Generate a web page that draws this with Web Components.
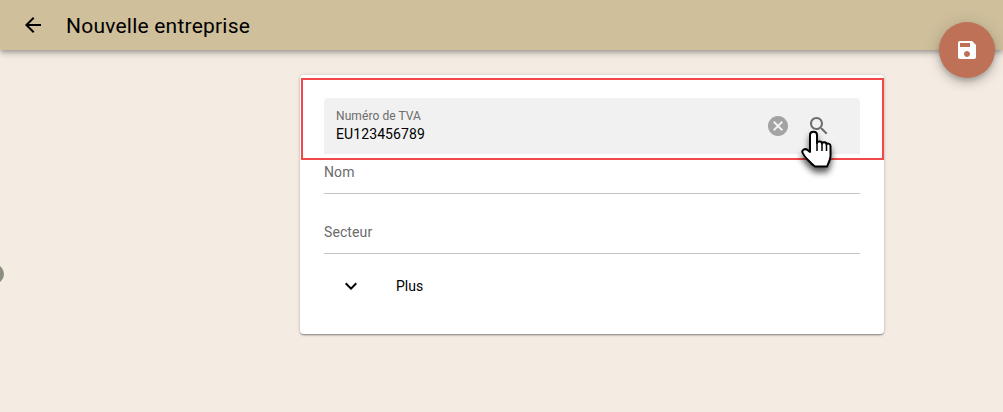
<!DOCTYPE html>
<html lang="fr">
<head>
<meta charset="utf-8">
<title>Nouvelle entreprise</title>
<style>
  html, body { margin: 0; height: 100%; }
  body { background: #f4ece3; font-family: Roboto, "Liberation Sans", sans-serif; overflow: hidden; }
</style>
</head>
<body>
<app-page>
  <app-toolbar slot="toolbar" title="Nouvelle entreprise"></app-toolbar>
  <form-card>
    <filled-field label="Numéro de TVA" value="EU123456789"></filled-field>
    <line-field label="Nom"></line-field>
    <line-field label="Secteur"></line-field>
    <more-row label="Plus"></more-row>
  </form-card>
</app-page>

<script>
const icons = {
  back: "M20 11H7.83l5.59-5.59L12 4l-8 8 8 8 1.41-1.41L7.83 13H20v-2z",
  save: "M17 3H5c-1.11 0-2 .9-2 2v14c0 1.1.89 2 2 2h14c1.1 0 2-.9 2-2V7l-4-4zm-5 16c-1.66 0-3-1.34-3-3s1.34-3 3-3 3 1.34 3 3-1.34 3-3 3zm3-10H5V5h10v4z",
  search: "M15.5 14h-.79l-.28-.27C15.41 12.59 16 11.11 16 9.5 16 5.91 13.09 3 9.5 3S3 5.91 3 9.5 5.91 16 9.5 16c1.61 0 3.09-.59 4.23-1.57l.27.28v.79l5 4.99L20.49 19l-4.99-5zm-6 0C7.01 14 5 11.99 5 9.5S7.01 5 9.5 5 14 7.01 14 9.5 11.99 14 9.5 14z",
  cancel: "M12 2C6.47 2 2 6.47 2 12s4.47 10 10 10 10-4.47 10-10S17.53 2 12 2zm5 13.59L15.59 17 12 13.41 8.41 17 7 15.59 10.59 12 7 8.41 8.41 7 12 10.59 15.59 7 17 8.41 13.41 12 17 15.59z",
  more: "M16.59 8.59L12 13.17 7.41 8.59 6 10l6 6 6-6z"
};
const svg = (name, size, fill) =>
  `<svg width="${size}" height="${size}" viewBox="0 0 24 24" fill="${fill}"><path d="${icons[name]}"/></svg>`;

class AppPage extends HTMLElement {
  constructor() {
    super();
    this.attachShadow({ mode: "open" }).innerHTML = `
      <style>
        :host { display: block; position: relative; height: 412px; overflow: hidden; }
        main { padding: 25px 0 0 300px; }
        .fab {
          position: absolute; left: 939px; top: 22px; width: 56px; height: 56px; border-radius: 50%;
          background: #bf7158; display: flex; align-items: center; justify-content: center;
          box-shadow: 0 3px 5px -1px rgba(0,0,0,.2), 0 6px 10px 0 rgba(0,0,0,.14), 0 1px 18px 0 rgba(0,0,0,.12);
        }
        .dot { position: absolute; left: -16px; top: 264px; width: 20px; height: 20px; border-radius: 50%; background: #8b8f7e; }
        .highlight { position: absolute; left: 301px; top: 78px; width: 579px; height: 78px; border: 2px solid #f44848; }
        .cursor { position: absolute; left: 798px; top: 126px; filter: drop-shadow(0 5px 3px rgba(0,0,0,.65)); }
      </style>
      <slot name="toolbar"></slot>
      <main><slot></slot></main>
      <div class="dot"></div>
      <div class="highlight"></div>
      <div class="fab">${svg("save", 24, "#fff")}</div>
      <svg class="cursor" width="40" height="48" viewBox="0 0 40 48">
        <path d="M12 9c0-4.500 7-4.500 7 0V17c0-2.200 5-2 5 .5 .3-2 4.500-1.800 4.500 1 .5-1.600 4-1.200 4 1.500V30c0 4-2 7-3.500 10.500H17c-3-2-11-10-12.500-14-1-2.500 2.500-4.500 5-2.500L12 26z" fill="#fff" stroke="#000" stroke-width="2" stroke-linejoin="round"/>
        <path d="M19 17v8M24 18v7M28.500 19v6" stroke="#000" stroke-width="1.500" fill="none"/>
      </svg>`;
  }
}

class AppToolbar extends HTMLElement {
  constructor() {
    super();
    this.attachShadow({ mode: "open" }).innerHTML = `
      <style>
        :host {
          display: flex; align-items: center; height: 50px; background: #cfbf9b; padding-left: 21px;
          box-shadow: 0 2px 4px -1px rgba(0,0,0,.2), 0 4px 5px 0 rgba(0,0,0,.14), 0 1px 10px 0 rgba(0,0,0,.12);
          position: relative; gap: 21px;
        }
        svg { display: block; }
        span { font-size: 21px; font-weight: 400; letter-spacing: .22px; color: #000; padding-top: 2px; }
      </style>
      ${svg("back", 24, "#000")}
      <span>${this.getAttribute("title")}</span>`;
  }
}

class FormCard extends HTMLElement {
  constructor() {
    super();
    this.attachShadow({ mode: "open" }).innerHTML = `
      <style>
        :host {
          display: block; box-sizing: border-box; width: 584px; height: 259px; padding: 23px 24px 0;
          background: #fff; border-radius: 4px;
          box-shadow: 0 2px 2px -1px rgba(0,0,0,.3), 0 1px 2px 0 rgba(0,0,0,.18), 0 0 4px 0 rgba(0,0,0,.12);
        }
      </style>
      <slot></slot>`;
  }
}

class FilledField extends HTMLElement {
  constructor() {
    super();
    this.attachShadow({ mode: "open" }).innerHTML = `
      <style>
        :host {
          display: flex; align-items: center; box-sizing: border-box; height: 56px; padding: 0 29px 0 12px;
          background: #f1f1f1; border-radius: 4px 4px 0 0;
        }
        .text { flex: 1; padding-bottom: 1px; }
        .label { font-size: 12px; line-height: 16px; color: #6b6b6b; letter-spacing: .08px; }
        .value { font-size: 14px; line-height: 20px; color: #000; letter-spacing: .1px; }
        svg { display: block; }
        .actions { display: flex; gap: 17px; align-items: center; }
      </style>
      <div class="text">
        <div class="label">${this.getAttribute("label")}</div>
        <div class="value">${this.getAttribute("value")}</div>
      </div>
      <div class="actions">${svg("cancel", 24, "#a3a3a3")}${svg("search", 24, "#6e6e6e")}</div>`;
  }
}

class LineField extends HTMLElement {
  constructor() {
    super();
    this.attachShadow({ mode: "open" }).innerHTML = `
      <style>
        :host {
          display: flex; align-items: flex-end; box-sizing: border-box; height: 60px; padding-bottom: 11px;
          border-bottom: 1px solid #c4c4c4; font-size: 14px; line-height: 20px; color: #6b6b6b; letter-spacing: .1px;
        }
        :host(:first-of-type) { height: 40px; }
      </style>
      ${this.getAttribute("label")}`;
  }
}

class MoreRow extends HTMLElement {
  constructor() {
    super();
    this.attachShadow({ mode: "open" }).innerHTML = `
      <style>
        :host { display: flex; align-items: center; height: 64px; padding-left: 15px; gap: 33px; font-size: 14px; color: #000; }
        svg { display: block; }
      </style>
      ${svg("more", 24, "#000")}
      <span>${this.getAttribute("label")}</span>`;
  }
}

customElements.define("app-page", AppPage);
customElements.define("app-toolbar", AppToolbar);
customElements.define("form-card", FormCard);
customElements.define("filled-field", FilledField);
customElements.define("line-field", LineField);
customElements.define("more-row", MoreRow);
</script>
</body>
</html>
